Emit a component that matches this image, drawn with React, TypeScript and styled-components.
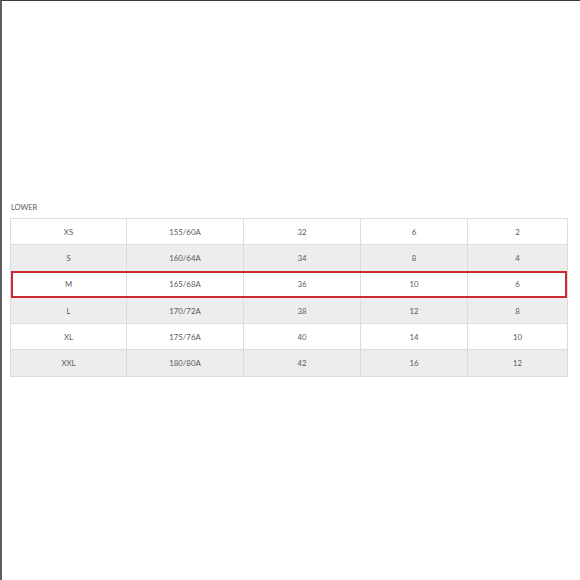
import styled, { createGlobalStyle } from "styled-components"

const GlobalStyle = createGlobalStyle`
  html, body {
    margin: 0;
    padding: 0;
    background: #ffffff;
  }
`

const Page = styled.div`
  width: 580px;
  height: 580px;
  box-sizing: border-box;
  border-top: 1px solid #3a3a3a;
  border-left: 2px solid #5e5e5e;
  background: #ffffff;
  padding: 201px 0 0 8px;
  display: flex;
  flex-direction: column;
  font-family: Lato, "Open Sans", sans-serif;
  color: #5a5a5a;
`

const SectionTitle = styled.div`
  font-size: 7.5px;
  line-height: 12px;
  margin-left: 1px;
  margin-bottom: 4px;
`

const Grid = styled.div`
  width: 558px;
  box-sizing: border-box;
  border-top: 1px solid #dcdcdc;
  border-left: 1px solid #dcdcdc;
  display: flex;
  flex-direction: column;
`

const Row = styled.div<{ $shaded: boolean; $highlight: boolean }>`
  display: grid;
  grid-template-columns: 116px 117px 117px 107px 1fr;
  height: 26.3px;
  background: ${(p) => (p.$shaded ? "#ededed" : "#ffffff")};
  position: relative;

  ${(p) =>
    p.$highlight &&
    `
    &::after {
      content: "";
      position: absolute;
      left: 0px;
      right: 1px;
      top: -1px;
      bottom: 0px;
      border: 2px solid #cc2a30;
      pointer-events: none;
    }
  `}
`

const Cell = styled.div`
  display: flex;
  align-items: center;
  justify-content: center;
  border-right: 1px solid #dcdcdc;
  border-bottom: 1px solid #dcdcdc;
  font-size: 7.8px;
  color: #5a5a5a;
`

const rows = [
  ["XS", "155/60A", "32", "6", "2"],
  ["S", "160/64A", "34", "8", "4"],
  ["M", "165/68A", "36", "10", "6"],
  ["L", "170/72A", "38", "12", "8"],
  ["XL", "175/76A", "40", "14", "10"],
  ["XXL", "180/80A", "42", "16", "12"],
]

export default function App() {
  return (
    <>
      <GlobalStyle />
      <Page>
        <SectionTitle>LOWER</SectionTitle>
        <Grid>
          {rows.map((row, i) => (
            <Row key={row[0]} $shaded={i % 2 === 1} $highlight={row[0] === "M"}>
              {row.map((value, j) => (
                <Cell key={j}>{value}</Cell>
              ))}
            </Row>
          ))}
        </Grid>
      </Page>
    </>
  )
}
